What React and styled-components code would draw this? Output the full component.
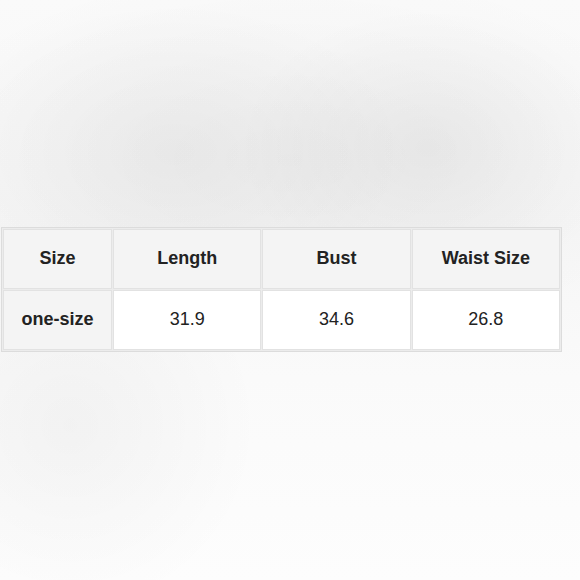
import React from 'react';
import styled, { createGlobalStyle } from 'styled-components';

const GlobalStyle = createGlobalStyle`
  html, body {
    margin: 0;
    padding: 0;
  }
  body {
    font-family: "Liberation Sans", Arial, sans-serif;
  }
`;

const Page = styled.div`
  width: 580px;
  height: 580px;
  box-sizing: border-box;
  padding: 227px 0 0 1px;
  background:
    radial-gradient(ellipse 230px 150px at 175px 152px, rgba(0,0,0,0.045), rgba(0,0,0,0) 100%),
    radial-gradient(ellipse 190px 140px at 428px 148px, rgba(0,0,0,0.05), rgba(0,0,0,0) 100%),
    radial-gradient(ellipse 400px 200px at 290px 160px, rgba(0,0,0,0.03), rgba(0,0,0,0) 100%),
    radial-gradient(circle 190px at 70px 425px, rgba(0,0,0,0.035), rgba(0,0,0,0) 100%),
    linear-gradient(#fafafa, #f6f6f6 40%, #fafafa 65%, #fdfdfd);
`;

const Table = styled.table`
  border-collapse: separate;
  border-spacing: 1px;
  border: 1px solid #dcdcdc;
  background: #ececec;
  width: 561px;
  table-layout: fixed;
`;

const Cell = styled.td`
  height: 60px;
  padding: 0 0 2px;
  box-sizing: border-box;
  border: 1px solid #e2e2e2;
  text-align: center;
  font-size: 18px;
  color: #222;
  font-weight: ${({ $bold }) => ($bold ? 700 : 400)};
  background: ${({ $shade }) => ($shade ? '#f4f4f4' : '#ffffff')};
`;

const headers = ['Size', 'Length', 'Bust', 'Waist Size'];
const values = ['31.9', '34.6', '26.8'];

export default function App() {
  return (
    <>
      <GlobalStyle />
      <Page>
        <Table>
          <colgroup>
            <col style={{ width: 109 }} />
            <col />
            <col />
            <col />
          </colgroup>
          <tbody>
            <tr>
              {headers.map((h) => (
                <Cell key={h} $bold $shade>{h}</Cell>
              ))}
            </tr>
            <tr>
              <Cell $bold $shade>one-size</Cell>
              {values.map((v) => (
                <Cell key={v}>{v}</Cell>
              ))}
            </tr>
          </tbody>
        </Table>
      </Page>
    </>
  );
}
